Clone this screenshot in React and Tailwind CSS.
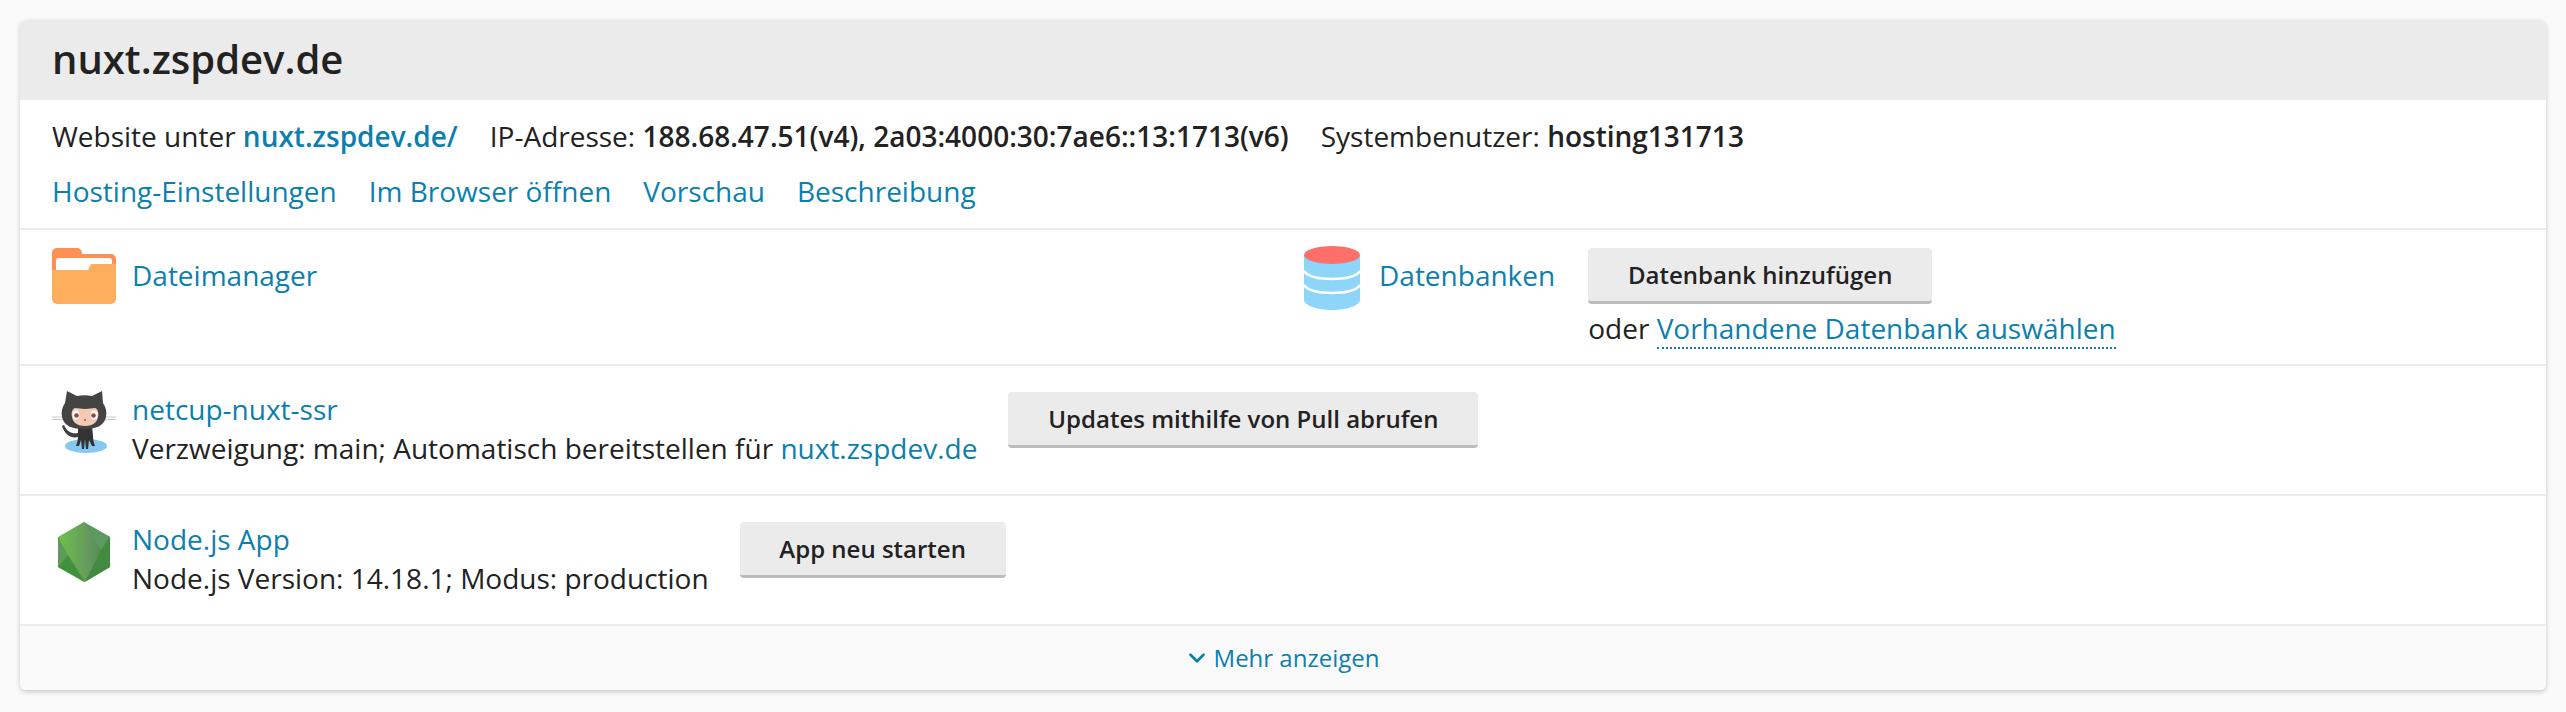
import { ChevronDown } from "lucide-react";

const link = "text-[#0d7fae]";

function FolderIcon() {
  return (
    <svg width="64" height="56" viewBox="0 0 64 56" className="flex-none">
      <path d="M0 5a5 5 0 0 1 5-5h20a5 5 0 0 1 5 5v1h29a5 5 0 0 1 5 5v16H0z" fill="#fd8f57" />
      <path d="M4 13a3 3 0 0 1 3-3h50a3 3 0 0 1 3 3v12H4z" fill="#fff" />
      <path d="M0 22h36l3-6h25v35a5 5 0 0 1-5 5H5a5 5 0 0 1-5-5z" fill="#ffae5e" />
    </svg>
  );
}

function DatabaseIcon() {
  return (
    <svg width="56" height="64" viewBox="0 0 56 64" className="flex-none">
      <path d="M0 9h56v45c0 5-12 10-28 10S0 59 0 54z" fill="#8dd6f9" />
      <path d="M0 25c3 5 13 8 28 8s25-3 28-8" fill="none" stroke="#fff" strokeWidth="2.5" />
      <path d="M0 39c3 5 13 8 28 8s25-3 28-8" fill="none" stroke="#fff" strokeWidth="2.5" />
      <ellipse cx="28" cy="9" rx="28" ry="9" fill="#ff6f69" />
    </svg>
  );
}

function OctocatIcon() {
  return (
    <svg width="64" height="64" viewBox="0 0 64 64" className="flex-none">
      <ellipse cx="34" cy="56" rx="21" ry="7" fill="#86c8f0" />
      <path d="M0 27h15M0 29.500h15M49 27h15M49 29.500h15" stroke="#c8c8c8" strokeWidth="1" />
      <path d="M26 43c-6 1-11-1-14-8l-2 1c2 7 8 13 16 11z" fill="#3f3f3f" />
      <path d="M26 36h14l1 10c0 4 1 7 2 10h-3l-3-6-1 9h-2l-1-10-1 10h-2l-1-9-2 6h-3c1-3 2-6 2-10z" fill="#333" />
      <path d="M15 1l10 5c5-1 10-1 15 0l10-5 1 12c3 4 4 9 3 14-2 9-10 12-22 12s-20-3-22-12c-1-5 0-10 3-14z" fill="#444" />
      <path d="M23 18c3 0 6 1 10 1s7-1 10-1c3 1 4 5 3 9-1 6-6 9-13 9s-12-3-13-9c-1-4 0-8 3-9z" fill="#f4cbb2" />
      <ellipse cx="24" cy="25" rx="3.500" ry="4.500" fill="#fff" />
      <ellipse cx="42" cy="25" rx="3.500" ry="4.500" fill="#fff" />
      <circle cx="24.500" cy="25.500" r="2.300" fill="#a3423a" />
      <circle cx="41.500" cy="25.500" r="2.300" fill="#a3423a" />
      <circle cx="33" cy="30" r="1" fill="#b2574f" />
    </svg>
  );
}

function NodeIcon() {
  return (
    <svg width="52" height="60" viewBox="0 0 52 60" className="flex-none">
      <defs>
        <linearGradient id="nodeFill" x1="0" x2="1" y1="0" y2="0">
          <stop offset="0" stopColor="#6cc24a" />
          <stop offset="0.6" stopColor="#66975f" />
          <stop offset="1" stopColor="#41873f" />
        </linearGradient>
      </defs>
      <path d="M26 0l26 15v30L26 60 0 45V15z" fill="url(#nodeFill)" />
      <path d="M0 15v30l10-12z" fill="#5f9a5c" />
      <path d="M0 45l10-12 17 27z" fill="#41903c" />
      <path d="M25 0l27 15-9 13z" fill="#5c9a62" />
      <path d="M52 15l-9 13-16 32 25-15z" fill="#438a41" />
    </svg>
  );
}

function ActionButton({ children, className }) {
  return (
    <button
      className={`flex h-[56px] items-center justify-center rounded-[4px] border-b-[3px] border-[#bcbcbc] bg-[#ebebeb] text-[24px] font-semibold text-[#222] ${className}`}
    >
      {children}
    </button>
  );
}

export default function App() {
  return (
    <div
      className="min-h-[712px] bg-[#fafafa] p-5 text-[28px] leading-[36px] text-[#222]"
      style={{ fontFamily: '"Open Sans", sans-serif' }}
    >
      <div className="overflow-hidden rounded-md bg-white shadow-[0_2px_5px_rgba(0,0,0,0.2)]">
        <div className="flex h-[80px] items-center bg-[#ebebeb] px-8 pb-0.5">
          <h1 className="text-[40px] font-semibold">nuxt.zspdev.de</h1>
        </div>

        <div className="h-[130px] border-b-2 border-[#ebebeb] px-8 pt-[18px]">
          <div className="flex gap-8">
            <span>
              Website unter <a className={`font-semibold ${link}`}>nuxt.zspdev.de/</a>
            </span>
            <span>
              IP-Adresse: <b className="font-semibold">188.68.47.51(v4), 2a03:4000:30:7ae6::13:1713(v6)</b>
            </span>
            <span>
              Systembenutzer: <b className="font-semibold">hosting131713</b>
            </span>
          </div>
          <div className={`mt-[19px] flex gap-8 ${link}`}>
            <a>Hosting-Einstellungen</a>
            <a>Im Browser öffnen</a>
            <a>Vorschau</a>
            <a>Beschreibung</a>
          </div>
        </div>

        <div className="flex h-[136px] border-b-2 border-[#ebebeb] px-8 pt-[18px]">
          <div className="flex w-[1252px] items-start gap-4">
            <FolderIcon />
            <a className={`mt-[9px] ${link}`}>Dateimanager</a>
          </div>
          <div className="flex items-start">
            <div className="-mt-0.5">
              <DatabaseIcon />
            </div>
            <a className={`ml-[19px] mt-[9px] ${link}`}>Datenbanken</a>
            <div className="ml-[33px]">
              <ActionButton className="w-[344px]">Datenbank hinzufügen</ActionButton>
              <p className="mt-[6px]">
                oder <a className={`border-b-2 border-dotted border-[#0d7fae] ${link}`}>Vorhandene Datenbank auswählen</a>
              </p>
            </div>
          </div>
        </div>

        <div className="flex h-[130px] items-start border-b-2 border-[#ebebeb] pl-8 pt-[25px]">
          <div className="-mt-px">
            <OctocatIcon />
          </div>
          <div className="ml-4">
            <a className={`block ${link}`}>netcup-nuxt-ssr</a>
            <p className="mt-[3px]">
              Verzweigung: main; Automatisch bereitstellen für <a className={link}>nuxt.zspdev.de</a>
            </p>
          </div>
          <ActionButton className="ml-[31px] mt-px w-[470px]">Updates mithilfe von Pull abrufen</ActionButton>
        </div>

        <div className="flex h-[130px] items-start border-b-2 border-[#ebebeb] pl-[38px] pt-[25px]">
          <div className="mt-px">
            <NodeIcon />
          </div>
          <div className="ml-[22px]">
            <a className={`block ${link}`}>Node.js App</a>
            <p className="mt-[3px]">Node.js Version: 14.18.1; Modus: production</p>
          </div>
          <ActionButton className="ml-[31px] mt-px w-[266px]">App neu starten</ActionButton>
        </div>

        <div className={`flex h-[64px] items-center justify-center gap-1 bg-[#fafafa] pr-[3px] text-[24px] ${link}`}>
          <ChevronDown size={26} strokeWidth={2.5} />
          <a>Mehr anzeigen</a>
        </div>
      </div>
    </div>
  );
}
